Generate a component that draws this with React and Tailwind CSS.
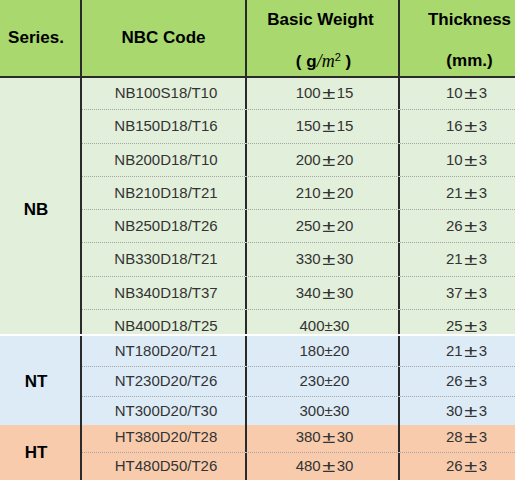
import React from "react";

const groups = [
  {
    name: "NB",
    bg: "bg-[#e2efda]",
    sep: true,
    label: "pt-[8px]",
    rows: [
      { code: "NB100S18/T10", w: ["100", "15"], wide: true, t: "10", h: "h-[32px]" },
      { code: "NB150D18/T16", w: ["150", "15"], wide: true, t: "16", h: "h-[34px]" },
      { code: "NB200D18/T10", w: ["200", "20"], wide: true, t: "10", h: "h-[33px]" },
      { code: "NB210D18/T21", w: ["210", "20"], wide: true, t: "21", h: "h-[33px]" },
      { code: "NB250D18/T26", w: ["250", "20"], wide: true, t: "26", h: "h-[33px]" },
      { code: "NB330D18/T21", w: ["330", "30"], wide: true, t: "21", h: "h-[34px]" },
      { code: "NB340D18/T37", w: ["340", "30"], wide: true, t: "37", h: "h-[33px]" },
      { code: "NB400D18/T25", w: ["400", "30"], wide: false, t: "25", h: "h-[24px]", pad: "pt-[9px]" },
    ],
  },
  {
    name: "NT",
    bg: "bg-[#ddebf7]",
    label: "pt-[2px]",
    rows: [
      { code: "NT180D20/T21", w: ["180", "20"], wide: false, t: "21", h: "h-[31px]" },
      { code: "NT230D20/T26", w: ["230", "20"], wide: false, t: "26", h: "h-[30px]" },
      { code: "NT300D20/T30", w: ["300", "30"], wide: false, t: "30", h: "h-[28px]" },
    ],
  },
  {
    name: "HT",
    bg: "bg-[#f8cbad]",
    label: "",
    rows: [
      { code: "HT380D20/T28", w: ["380", "30"], wide: true, t: "28", h: "h-[28px]", pad: "pb-[3px]" },
      { code: "HT480D50/T26", w: ["480", "30"], wide: true, t: "26", h: "h-[27px]" },
    ],
  },
];

function PlusMinus({ wide }) {
  if (!wide) return <span>±</span>;
  return (
    <span className="inline-block w-[16px] text-center text-[17px] leading-none">
      <span className="inline-block scale-x-[1.4]">±</span>
    </span>
  );
}

function App() {
  return (
    <div className="w-[515px] h-[480px] overflow-hidden bg-white font-['Liberation_Sans',Arial,sans-serif]">
      <div className="w-[533px]">
        {/* Header */}
        <div className="flex h-[78px] bg-[#a8d86e] border-b-2 border-[#2a2a2a] text-[17px] font-bold text-black">
          <div className="w-[82px] border-r-2 border-[#2a2a2a] flex items-center justify-center pr-[8px]">
            Series.
          </div>
          <div className="w-[165px] border-r-2 border-[#2a2a2a] flex items-center justify-center">
            NBC Code
          </div>
          <div className="w-[153px] border-r-2 border-[#2a2a2a] flex flex-col items-center pt-[7px] gap-[15px]">
            <span className="pr-[4px]">Basic Weight</span>
            <span className="pl-[2px]">
              ( g<span className="font-['Liberation_Serif',serif] italic font-normal text-[18px]">/m</span>
              <sup className="text-[11px] font-normal">2</sup> )
            </span>
          </div>
          <div className="w-[133px] flex flex-col items-center pt-[7px] gap-[15px] pl-[6px]">
            <span>Thickness</span>
            <span>(mm.)</span>
          </div>
        </div>

        {/* Body */}
        {groups.map((g) => (
          <div
            key={g.name}
            className={`flex ${g.bg} ${g.sep ? "border-b-2 border-white" : ""}`}
          >
            <div className={`w-[82px] border-r-2 border-[#2a2a2a] flex items-center justify-center pr-[8px] text-[17px] font-bold text-black ${g.label}`}>
              {g.name}
            </div>
            <div className="flex flex-col text-[15px] text-[#333]">
              {g.rows.map((r, i) => (
                <div
                  key={r.code}
                  className={`flex ${r.h} ${
                    i < g.rows.length - 1 ? "border-b border-dotted border-[#a6a6a6]" : ""
                  }`}
                >
                  <div className={`w-[165px] border-r-2 border-[#2a2a2a] flex items-center justify-center pl-[5px] ${r.pad || ""}`}>
                    {r.code}
                  </div>
                  <div className={`w-[153px] border-r-2 border-[#2a2a2a] flex items-center justify-center pl-[4px] ${r.pad || ""}`}>
                    {r.w[0]}
                    <PlusMinus wide={r.wide} />
                    {r.w[1]}
                  </div>
                  <div className={`w-[133px] flex items-center justify-center ${r.pad || ""}`}>
                    {r.t}
                    <PlusMinus wide />
                    3
                  </div>
                </div>
              ))}
            </div>
          </div>
        ))}
      </div>
    </div>
  );
}

export default App;
